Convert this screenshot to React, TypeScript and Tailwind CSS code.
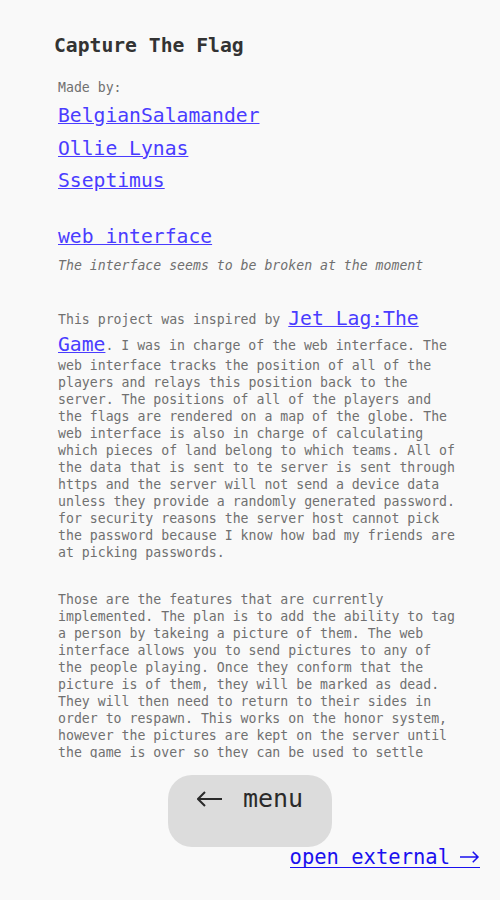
const mono = "font-['DejaVu_Sans_Mono',monospace]"

function Arrow({ dir, className }: { dir: "left" | "right"; className?: string }) {
    return (
        <svg viewBox="0 0 26 16" className={className} fill="none" stroke="currentColor" strokeWidth="2">
            {dir === "left" ? (
                <path d="M1 8 H25 M8 1 L1 8 L8 15" />
            ) : (
                <path d="M1 8 H25 M18 1 L25 8 L18 15" />
            )}
        </svg>
    )
}

const authors = ["BelgianSalamander", "Ollie Lynas", "Sseptimus"]

export default function App() {
    return (
        <div className={mono + " flex h-[900px] w-full flex-col overflow-hidden bg-[#f9f9f9]"}>
            <div className="h-[758px] shrink-0 overflow-hidden pl-[54px] pt-[34px]">
                <h1 className="text-[19.7px] font-bold leading-[24px] text-[#333]">Capture The Flag</h1>

                <div className="w-[404px] pl-[4px]">
                    <p className="mt-[21px] text-[13.2px] leading-[17px] text-[#707070]">Made by:</p>
                    <div className="mt-[8px] flex flex-col gap-[8.5px]">
                        {authors.map((a) => (
                            <a key={a} href="#" className="text-[19.7px] leading-[24px] text-[#4a3cff] underline">
                                {a}
                            </a>
                        ))}
                    </div>

                    <a href="#" className="mt-[32px] block text-[19.7px] leading-[24px] text-[#4a3cff] underline">
                        web interface
                    </a>
                    <p className="mt-[8px] text-[13.2px] italic leading-[17px] text-[#707070]">
                        The interface seems to be broken at the moment
                    </p>

                    <p className="mt-[32px] text-[13.2px] leading-[17px] text-[#707070]">
                        This project was inspired by{" "}
                        <a href="#" className="align-[-1px] text-[19.7px] leading-[25.5px] text-[#4a3cff] underline">
                            Jet Lag:The Game
                        </a>
                        . I was in charge of the web interface. The web interface tracks the position of all of
                        the players and relays this position back to the server. The positions of all of the
                        players and the flags are rendered on a map of the globe. The web interface is also in
                        charge of calculating which pieces of land belong to which teams. All of the data that is
                        sent to te server is sent through https and the server will not send a device data unless
                        they provide a randomly generated password. for security reasons the server host cannot
                        pick the password because I know how bad my friends are at picking passwords.
                    </p>

                    <p className="mt-[30px] text-[13.2px] leading-[17px] text-[#707070]">
                        Those are the features that are currently implemented. The plan is to add the ability to
                        tag a person by takeing a picture of them. The web interface allows you to send pictures
                        to any of the people playing. Once they conform that the picture is of them, they will be
                        marked as dead. They will then need to return to their sides in order to respawn. This
                        works on the honor system, however the pictures are kept on the server until the game is
                        over so they can be used to settle disputes.
                    </p>
                </div>
            </div>

            <div className="flex flex-col items-center pt-[17px]">
                <button className="flex h-[72px] w-[164px] items-start justify-center gap-[20px] rounded-[24px] bg-[#dcdcdc] pt-[9px] text-[25px] leading-[30px] text-[#2a2a2a]">
                    <Arrow dir="left" className="mt-[7px] h-[16px] w-[26px]" />
                    <span>menu</span>
                </button>
            </div>
            <div className="flex justify-end pr-[20px]">
                <a href="#" className="inline-flex items-center gap-[8px] border-b border-[#1a10ee] text-[20.5px] leading-[20px] text-[#1a10ee]">
                    <span>open external</span>
                    <Arrow dir="right" className="h-[12px] w-[22px]" />
                </a>
            </div>
        </div>
    )
}
